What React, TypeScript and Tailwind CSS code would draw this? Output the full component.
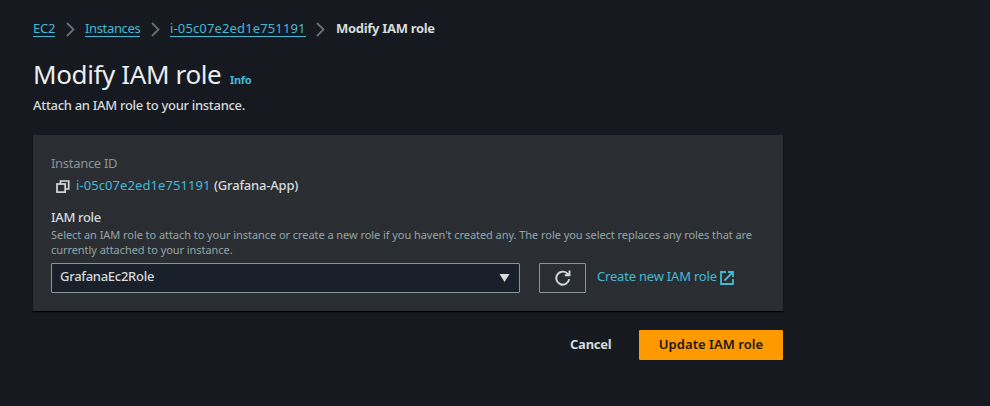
import React from "react";

function Chevron() {
  return (
    <svg className="h-[15px] w-[9px] shrink-0" viewBox="0 0 9 15" fill="none" stroke="#687078" strokeWidth="1.8">
      <path d="M1 1 L7.5 7.5 L1 14" />
    </svg>
  );
}

function Crumb({ text, className }: { text: string; className: string }) {
  return (
    <a className={`h-[18px] border-b border-[#44b9d6] leading-[18px] text-[#44b9d6] whitespace-nowrap ${className}`}>{text}</a>
  );
}

function CopyIcon() {
  return (
    <svg className="ml-[5px] mt-[5px] h-[13px] w-[14px] shrink-0" viewBox="0 0 14 13" fill="none" stroke="#d5dbdb" strokeWidth="1.7">
      <path d="M4.5 4V1H12.7V9H9.5" />
      <rect x="1" y="4" width="8.2" height="8.1" />
    </svg>
  );
}

function RefreshIcon() {
  return (
    <svg className="h-4 w-4" viewBox="0 0 16 16" fill="none" stroke="#d5dbdb" strokeWidth="1.9">
      <path d="M14.2 9.2A6.5 6.5 0 1 1 12.2 3.4L14 5" />
      <path d="M14.5 0.5V5.2H9.8" />
    </svg>
  );
}

function ExternalIcon() {
  return (
    <svg className="ml-[3px] h-[14px] w-[14px] shrink-0" viewBox="0 0 14 14" fill="none" stroke="#44b9d6" strokeWidth="1.8">
      <path d="M6 1H1V13H13V8" />
      <path d="M8 1H13V6M13 1L4.5 9.5" />
    </svg>
  );
}

export default function App() {
  return (
    <main className="h-[406px] w-[990px] overflow-hidden bg-[#16191f] pl-[33px] pt-[19px] font-['Noto_Sans',sans-serif] text-[13px] text-[#d5dbdb]">
      <nav className="flex h-[20px] items-start">
        <Crumb text="EC2" className="w-[22px] tracking-[-0.2px]" />
        <span className="flex w-[30px] justify-center pt-[3px]"><Chevron /></span>
        <Crumb text="Instances" className="w-[55px] tracking-[-0.35px]" />
        <span className="flex w-[30px] justify-center pt-[3px]"><Chevron /></span>
        <Crumb text="i-05c07e2ed1e751191" className="w-[136px] tracking-[0.14px]" />
        <span className="flex w-[29px] justify-center pt-[3px]"><Chevron /></span>
        <span className="ml-px font-bold leading-[18px] tracking-[-0.3px] whitespace-nowrap">Modify IAM role</span>
      </nav>
      <header className="mt-[17px] flex h-[36px] items-baseline whitespace-nowrap">
        <h1 className="w-[197px] text-[26px] leading-[36px] tracking-[-0.38px] text-[#eaeded]">Modify IAM role</h1>
        <a className="text-[11px] font-bold tracking-[-0.35px] text-[#44b9d6]">Info</a>
      </header>
      <p className="mt-[3px] h-[20px] font-medium leading-[20px] tracking-[-0.3px]">Attach an IAM role to your instance.</p>
      <section className="mt-[20px] h-[176px] w-[750px] bg-[#2a2e33] pl-[18px] pt-[18px] shadow-[0_1px_1px_#000]">
        <div className="leading-5 tracking-[-0.3px] text-[#879596]">Instance ID</div>
        <div className="mt-[2px] flex h-5 leading-5 whitespace-nowrap">
          <CopyIcon />
          <span className="ml-[6px] w-[138px] tracking-[0.08px] text-[#44b9d6]">i-05c07e2ed1e751191</span>
          <span className="font-medium tracking-[-0.2px]">(Grafana-App)</span>
        </div>
        <div className="mt-[12px] font-medium leading-5 tracking-[-0.35px]">IAM role</div>
        <p className="w-[715px] text-[11px] leading-[15px] tracking-[-0.057px] text-[#95a5a6] whitespace-nowrap">
          Select an IAM role to attach to your instance or create a new role if you haven't created any. The role you select replaces any roles that are
          <br />
          currently attached to your instance.
        </p>
        <div className="mt-[6px] flex h-[30px] items-center whitespace-nowrap">
          <button className="flex h-[30px] w-[469px] items-center justify-between rounded-[1px] border border-[#879596] bg-[#1a2029] pl-2 pr-[9px]">
            <span className="pb-[3px] font-medium leading-[25px] tracking-[-0.28px]">GrafanaEc2Role</span>
            <svg className="h-2 w-[11px]" viewBox="0 0 11 8"><path d="M0.5 0H10.5L5.5 8Z" fill="#d5dbdb" /></svg>
          </button>
          <button className="ml-[19px] flex h-[30px] w-[47px] items-center justify-center rounded-[1px] border border-[#879596]"><RefreshIcon /></button>
          <a className="ml-[11px] w-[120px] pb-[2px] tracking-[-0.2px] text-[#44b9d6]">Create new IAM role</a>
          <ExternalIcon />
        </div>
      </section>
      <footer className="mt-[19px] flex h-[30px] w-[750px] items-center justify-end font-bold whitespace-nowrap">
        <button className="w-[69px] text-left tracking-[-0.25px]">Cancel</button>
        <button className="h-[30px] w-[144px] rounded-[1px] bg-[#ff9900] font-semibold tracking-[0.05px] text-[#16191f]">Update IAM role</button>
      </footer>
    </main>
  );
}
